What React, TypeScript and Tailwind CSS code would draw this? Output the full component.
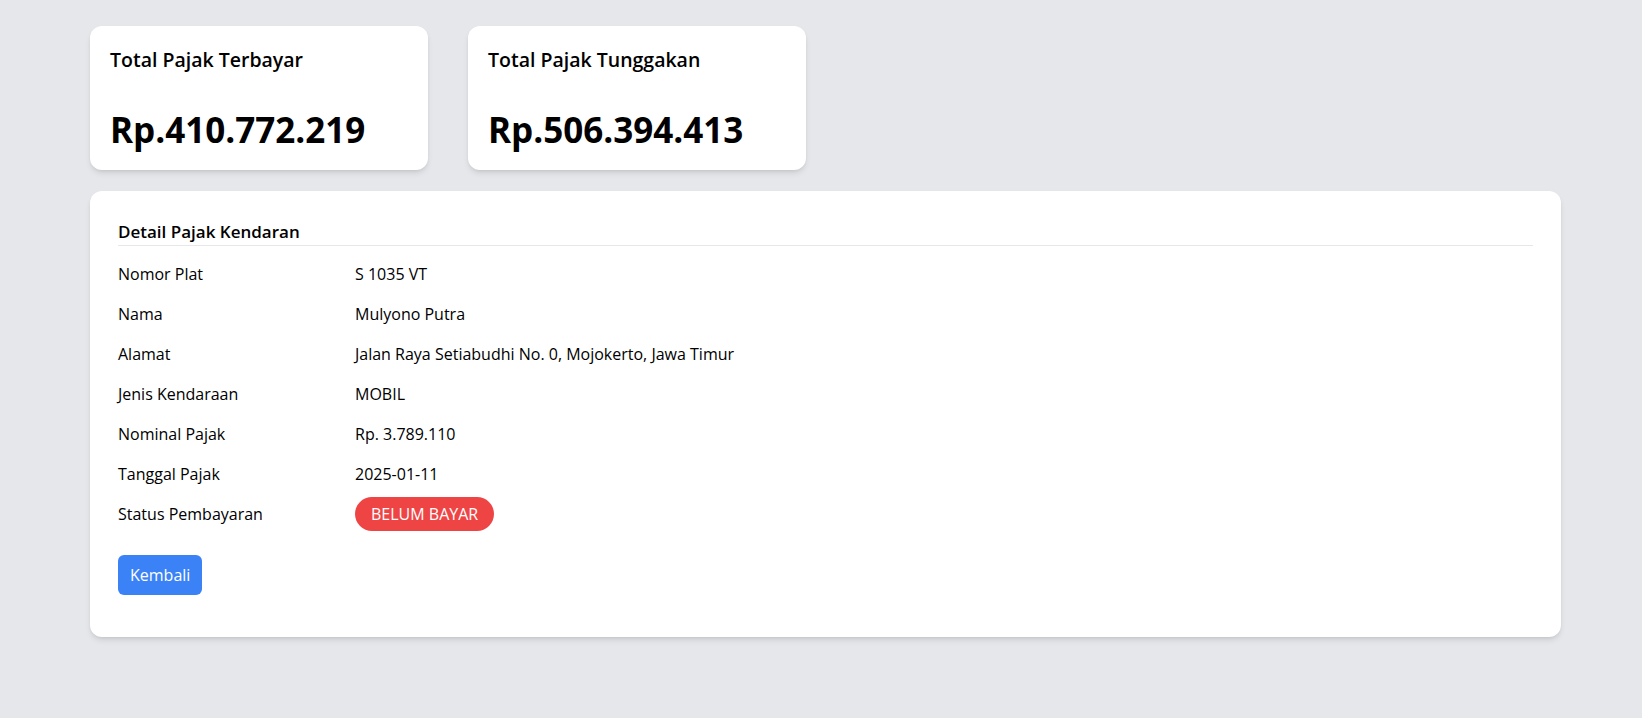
import React from 'react'

const rows = [
  { label: 'Nomor Plat', value: 'S 1035 VT' },
  { label: 'Nama', value: 'Mulyono Putra' },
  { label: 'Alamat', value: 'Jalan Raya Setiabudhi No. 0, Mojokerto, Jawa Timur' },
  { label: 'Jenis Kendaraan', value: 'MOBIL' },
  { label: 'Nominal Pajak', value: 'Rp. 3.789.110' },
  { label: 'Tanggal Pajak', value: '2025-01-11' },
]

const App = () => {
  return (
    <div className="min-h-screen bg-[#e5e7eb] pt-[26px] pl-[90px] pr-[81px] text-black" style={{ fontFamily: '"Open Sans", "Noto Sans", sans-serif' }}>
      <div className="flex gap-10">
        <div className="bg-white rounded-xl shadow-md w-[338px] h-[144px] p-5 flex flex-col justify-between">
          <h3 className="text-[19.5px] font-semibold leading-7">Total Pajak Terbayar</h3>
          <p className="text-[35px] font-bold leading-10">Rp.410.772.219</p>
        </div>
        <div className="bg-white rounded-xl shadow-md w-[338px] h-[144px] p-5 flex flex-col justify-between">
          <h3 className="text-[19.5px] font-semibold leading-7">Total Pajak Tunggakan</h3>
          <p className="text-[35px] font-bold leading-10">Rp.506.394.413</p>
        </div>
      </div>

      <div className="mt-[21px] bg-white rounded-xl shadow-md px-7 pt-[29px] pb-[42px]">
        <h2 className="font-semibold text-[17px] leading-6 pb-[1px] border-b border-[#e5e7eb]">Detail Pajak Kendaran</h2>
        <div className="mt-[8px]">
          {rows.map((row, i) => (
            <div key={i} className="flex items-center h-10 text-base">
              <div className="w-[237px]">{row.label}</div>
              <div>{row.value}</div>
            </div>
          ))}
          <div className="flex items-center h-10 text-base">
            <div className="w-[237px]">Status Pembayaran</div>
            <span className="bg-[#ef4444] text-white rounded-full px-4 h-[34px] flex items-center">BELUM BAYAR</span>
          </div>
        </div>
        <button className="mt-[21px] bg-[#3b82f6] text-white rounded-md px-3 h-10 text-base">Kembali</button>
      </div>
    </div>
  )
}

export default App
